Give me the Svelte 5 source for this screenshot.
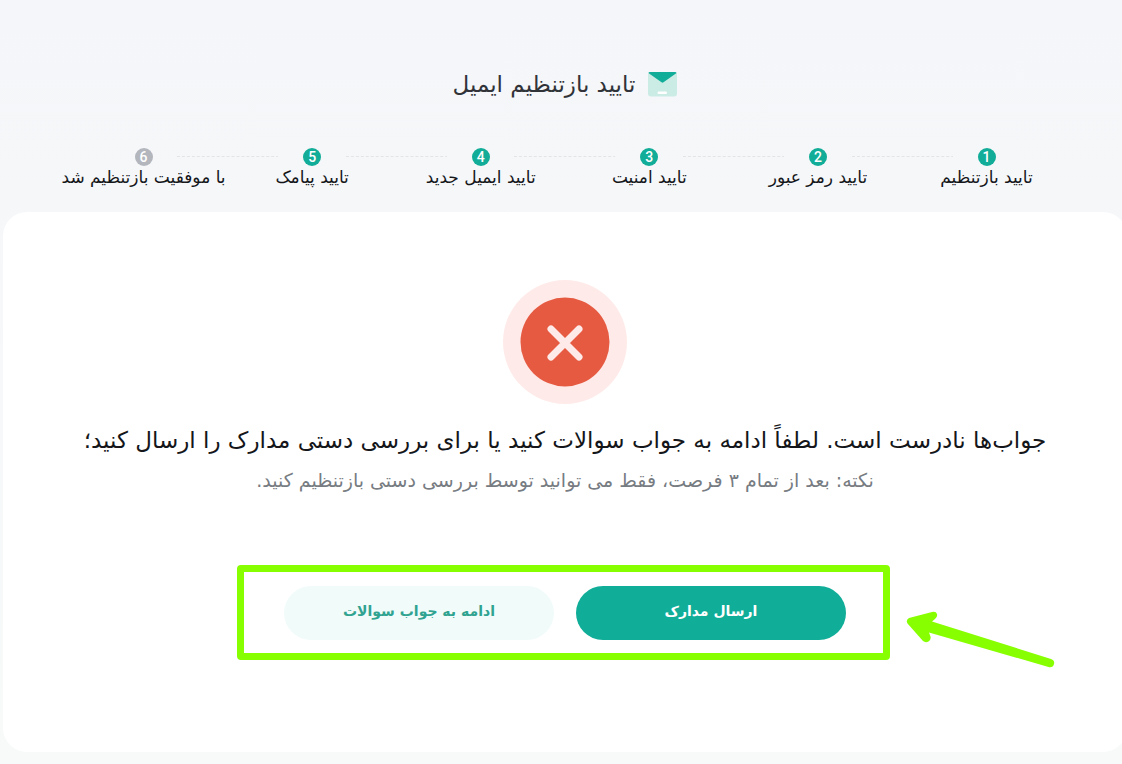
<script>
  const steps = [
    { label: 'تایید بازتنظیم', done: true },
    { label: 'تایید رمز عبور', done: true },
    { label: 'تایید امنیت', done: true },
    { label: 'تایید ایمیل جدید', done: true },
    { label: 'تایید پیامک', done: true },
    { label: 'با موفقیت بازتنظیم شد', done: false }
  ];
</script>

<div class="page" dir="rtl" lang="fa">
  <header>
    <svg class="mail" viewBox="0 0 30 26" aria-hidden="true">
      <rect x="1" y="1" width="29" height="24.500" rx="3" fill="#cbebe5" />
      <path d="M3 1h25q1.200 0 1.600 1L16.500 11.300q-1 .8-2 0L1.400 2q.4-1 1.600-1z" fill="#12ad98" />
      <rect x="10.500" y="20.500" width="9.500" height="2.400" rx="1.200" fill="#fff" />
    </svg>
    <h1>تایید بازتنظیم ایمیل</h1>
  </header>

  <ol class="steps">
    {#each steps as step, i}
      <li>
        <span class="dot" class:done={step.done}>{i + 1}</span>
        <span class="label">{step.label}</span>
        {#if i < steps.length - 1}
          <svg class="line" viewBox="0 0 102 2" preserveAspectRatio="none" aria-hidden="true">
            <path d="M0 .5h102" stroke="#e2e4e6" stroke-dasharray="3 2" />
          </svg>
        {/if}
      </li>
    {/each}
  </ol>

  <main>
    <svg class="status" viewBox="0 0 124 124" aria-hidden="true">
      <circle cx="62" cy="62" r="62" fill="#feebe9" />
      <circle cx="62" cy="62" r="44.500" fill="#e65a41" />
      <path d="M48 49l28 28M76 49L48 77" stroke="#feebe9" stroke-width="7" stroke-linecap="round" />
    </svg>
    <h2>جواب‌ها نادرست است. لطفاً ادامه به جواب سوالات کنید یا برای بررسی دستی مدارک را ارسال کنید؛</h2>
    <p>نکته: بعد از تمام ۳ فرصت، فقط می توانید توسط بررسی دستی بازتنظیم کنید.</p>
    <div class="actions">
      <button class="primary" type="button">ارسال مدارک</button>
      <button class="secondary" type="button">ادامه به جواب سوالات</button>
      <svg class="arrow" viewBox="0 0 150 60" aria-hidden="true">
        <path
          d="M4 8L27 2q4-1 5 2 .7 3-2 5l-3 2.500L146 49q4 1.500 3 5-1 4-5.500 3L24 22.500l1.500 4q.8 3-2 5-3 1.500-5.500-.5L2.500 13.500q-2-3.500 1.500-5.500z"
          fill="#88ff00"
        />
      </svg>
    </div>
  </main>
</div>

<style>
  :global(body) {
    margin: 0;
    background: linear-gradient(#f5f6f9, #f7faf9);
    overflow-x: hidden;
  }
  .page {
    box-sizing: border-box;
    min-height: 100vh;
    margin: 0 -5px 0 3px;
    padding: 68px 0 12px;
    font-family: 'DejaVu Sans', sans-serif;
    color: #14161a;
  }
  header {
    display: flex;
    align-items: center;
    justify-content: center;
    gap: 12px;
    height: 32px;
  }
  .mail {
    width: 30px;
    height: 26px;
  }
  h1,
  h2,
  p {
    margin: 0;
    font-weight: 400;
    text-align: center;
  }
  h1 {
    font-size: 23px;
    line-height: 32px;
    color: #303338;
  }
  .steps {
    display: grid;
    grid-template-columns: repeat(6, 1fr);
    width: 90%;
    margin: 48px auto 0;
    padding: 0;
    list-style: none;
  }
  li {
    position: relative;
    display: flex;
    flex-direction: column;
    align-items: center;
    height: 64px;
  }
  .dot {
    width: 18px;
    height: 18px;
    border-radius: 50%;
    background: #b3b6bd;
    color: #fff;
    font: 500 14px/18px Roboto, sans-serif;
    text-align: center;
  }
  .dot.done {
    background: #12ad98;
  }
  .label {
    font-size: 17px;
    line-height: 22px;
    white-space: nowrap;
  }
  .line {
    position: absolute;
    top: 8px;
    left: -30%;
    width: 60%;
    height: 2px;
  }
  main {
    display: flex;
    flex-direction: column;
    align-items: center;
    padding: 68px 24px 92px;
    border-radius: 24px;
    background: #fff;
  }
  .status {
    width: 124px;
    height: 124px;
  }
  h2 {
    margin-top: 16px;
    font-size: 23px;
    line-height: 40px;
    white-space: nowrap;
  }
  p {
    margin-top: 4px;
    font-size: 19px;
    line-height: 32px;
    color: #777c82;
  }
  .actions {
    position: relative;
    display: flex;
    gap: 22px;
    margin: 69px 0 0 -3px;
    padding: 14px 37px 13px 40px;
    border: 7px solid #88ff00;
    border-radius: 4px;
  }
  button {
    width: 270px;
    height: 54px;
    padding: 0 16px 4px;
    border: 0;
    border-radius: 27px;
    font: 700 14px/24px 'DejaVu Sans', sans-serif;
    cursor: pointer;
  }
  .primary {
    background: #10ad98;
    color: #fff;
  }
  .secondary {
    background: #f1fbfa;
    color: #30a391;
  }
  .arrow {
    position: absolute;
    top: 38px;
    left: 100%;
    width: 150px;
    height: 60px;
    margin-left: 22px;
  }
</style>
